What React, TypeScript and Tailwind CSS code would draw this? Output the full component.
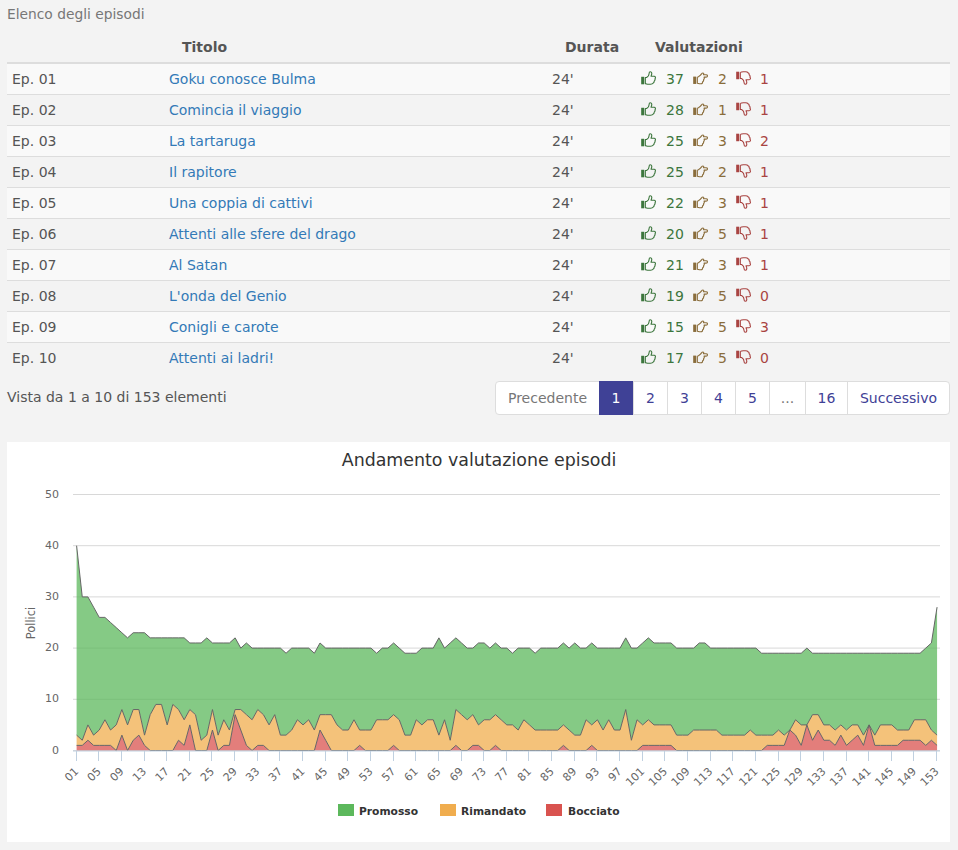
const FONT = "font-['DejaVu_Sans',Verdana,sans-serif]";

const rows = [
  ["Ep. 01", "Goku conosce Bulma", 37, 2, 1],
  ["Ep. 02", "Comincia il viaggio", 28, 1, 1],
  ["Ep. 03", "La tartaruga", 25, 3, 2],
  ["Ep. 04", "Il rapitore", 25, 2, 1],
  ["Ep. 05", "Una coppia di cattivi", 22, 3, 1],
  ["Ep. 06", "Attenti alle sfere del drago", 20, 5, 1],
  ["Ep. 07", "Al Satan", 21, 3, 1],
  ["Ep. 08", "L'onda del Genio", 19, 5, 0],
  ["Ep. 09", "Conigli e carote", 15, 5, 3],
  ["Ep. 10", "Attenti ai ladri!", 17, 5, 0],
] as const;

const total = [40,30,30,28,26,26,25,24,23,22,23,23,23,22,22,22,22,22,22,22,21,21,21,22,21,21,21,21,22,20,21,20,20,20,20,20,20,19,20,20,20,20,19,21,20,20,20,20,20,20,20,20,20,19,20,20,21,20,19,19,19,20,20,20,22,20,21,22,21,20,20,21,21,20,21,20,20,19,20,20,20,19,20,20,20,20,21,20,21,20,20,21,20,20,20,20,20,22,20,20,21,22,21,21,21,21,20,20,20,20,21,21,20,20,20,20,20,20,20,20,20,19,19,19,19,19,19,19,19,20,19,19,19,19,19,19,19,19,19,19,19,19,19,19,19,19,19,19,19,19,20,21,28];
const mid = [3,2,5,3,4,6,4,5,8,5,8,8,3,7,9,9,5,9,8,6,8,7,2,3,8,3,6,4,8,8,7,6,8,7,5,7,3,3,4,6,5,6,4,7,7,7,5,4,4,6,4,4,4,6,6,6,7,6,3,3,6,5,6,6,3,6,2,8,7,6,7,5,6,6,7,6,5,5,4,6,5,4,4,4,4,4,5,4,3,3,6,5,6,4,6,4,4,8,2,6,5,6,5,5,5,5,3,3,3,4,4,4,4,4,3,3,3,3,3,4,3,3,3,3,4,3,4,6,5,5,7,7,5,5,4,5,4,5,5,3,5,3,5,5,5,4,4,4,6,6,6,4,3];
const low = [1,1,2,1,1,1,1,0,3,0,2,3,1,0,0,0,0,0,2,1,5,0,0,0,4,0,1,1,7,4,1,0,1,1,0,0,0,0,0,0,0,0,0,4,2,0,0,0,0,0,1,0,0,0,0,0,1,0,0,0,0,0,0,0,0,0,0,1,0,0,1,1,0,0,1,0,0,0,0,0,0,0,0,0,0,0,1,0,0,0,0,1,0,0,0,0,0,0,0,0,1,1,1,1,1,1,0,0,0,0,0,0,0,0,0,0,0,0,0,0,0,0,1,1,1,1,4,3,1,5,2,4,2,2,1,3,1,2,3,1,5,1,1,1,1,1,2,2,2,2,1,2,1];

const X0 = 69.6;
const STEP = 5.661;
const Y0 = 308.5;
const UNIT = 5.12;
const px = (i: number) => +(X0 + i * STEP).toFixed(2);
const py = (v: number) => +(Y0 - v * UNIT).toFixed(2);
const line = (d: number[]) => d.map((v, i) => `${i ? "L" : "M"}${px(i)} ${py(v)}`).join(" ");
const band = (top: number[], bottom: number[] | null) => {
  const back = bottom
    ? bottom.map((_, i) => bottom.length - 1 - i).map((i) => `L${px(i)} ${py(bottom[i])}`).join(" ")
    : `L${px(152)} ${py(0)} L${px(0)} ${py(0)}`;
  return `${line(top)} ${back} Z`;
};

const ticks = Array.from({ length: 39 }, (_, k) => k * 4);
const grid = [0, 10, 20, 30, 40, 50];

function ThumbUp({ down = false }: { down?: boolean }) {
  return (
    <svg
      viewBox="0 0 16 16"
      preserveAspectRatio="none"
      className="w-[15px] h-[14px] shrink-0 mb-[3px]"
      style={down ? { transform: "scaleY(-1)" } : undefined}
    >
      <rect x="0.2" y="6.6" width="3.2" height="8.6" fill="currentColor" />
      <path
        d="M4.6 7.4 L6 7.4 C7.2 6.6 8.6 4.8 8.6 3 C8.6 1.6 9.1 0.8 10 0.8 C11.6 0.8 11.7 3 11.2 4.4 L10.7 6 L14 6 C15.6 6 15.7 8 14.9 9 C15.2 10 14.8 11 14.1 11.5 C14.2 12.8 13.6 13.6 12.8 13.9 C12.4 15 11.4 15.2 10.2 15.2 L7.8 15.2 C6.4 15.2 5.6 14.4 4.6 14.4 Z"
        fill="none"
        stroke="currentColor"
        strokeWidth="1.2"
        strokeLinejoin="round"
      />
    </svg>
  );
}

function HandRight() {
  return (
    <svg viewBox="0 0 16 16" preserveAspectRatio="none" className="w-[15px] h-[14px] shrink-0 mb-[3px]">
      <rect x="0.2" y="6.4" width="3.2" height="8.4" fill="currentColor" />
      <path
        d="M4.6 7.2 C6 7.2 7 5.6 8 4.6 C8.8 3.8 9.4 3 10 2.4 C11 1.8 11.9 2.8 11.2 4.2 L14 4.2 C15.9 4.2 15.9 7 14 7 L11.8 7 C12.2 8 12 9.2 11.3 9.8 C11.5 10.8 11 11.8 10.3 12.2 C10.3 13.6 9.6 14.6 8.4 14.6 L7.4 14.6 C6.2 14.6 5.6 14 4.6 14 Z"
        fill="none"
        stroke="currentColor"
        strokeWidth="1.2"
        strokeLinejoin="round"
      />
    </svg>
  );
}

function Chart() {
  const labelColor = "#666666";
  return (
    <svg width="943" height="400" viewBox="0 0 943 400" className="block">
      <text x="472" y="24" textAnchor="middle" fontSize="17.4" fill="#333333" fontFamily="'DejaVu Sans', sans-serif">
        Andamento valutazione episodi
      </text>
      {grid.map((g) => (
        <line key={g} x1="66" x2="933" y1={py(g)} y2={py(g)} stroke="#d8d8d8" strokeWidth="1" />
      ))}
      {grid.map((g) => (
        <text key={g} x="52" y={py(g) + 3} textAnchor="end" fontSize="11" fill={labelColor} fontFamily="'DejaVu Sans', sans-serif">
          {g}
        </text>
      ))}
      <text
        x="28"
        y="181"
        textAnchor="middle"
        fontSize="11.5"
        fill={labelColor}
        fontFamily="'DejaVu Sans', sans-serif"
        transform="rotate(-90 28 181)"
      >
        Pollici
      </text>

      <path d={band(total, mid)} fill="#5cb85c" fillOpacity="0.75" />
      <path d={band(mid, low)} fill="#f0ad4e" fillOpacity="0.75" />
      <path d={band(low, null)} fill="#d9534f" fillOpacity="0.75" />
      <path d={line(total)} fill="none" stroke="#666666" strokeWidth="1" />
      <path d={line(mid)} fill="none" stroke="#666666" strokeWidth="1" />
      <path d={line(low)} fill="none" stroke="#666666" strokeWidth="1" />

      <line x1="66" x2="933" y1="309" y2="309" stroke="#c0d0e0" strokeWidth="1" />
      {ticks.map((i) => (
        <g key={i}>
          <line x1={Math.round(px(i)) - 0.5} x2={Math.round(px(i)) - 0.5} y1="309" y2="319" stroke="#c0d0e0" strokeWidth="1" />
          <text
            x={px(i) + 2.5}
            y="330"
            textAnchor="end"
            fontSize="11"
            fill={labelColor}
            fontFamily="'DejaVu Sans', sans-serif"
            transform={`rotate(-45 ${px(i) + 2.5} 330)`}
          >
            {i + 1 < 10 ? `0${i + 1}` : i + 1}
          </text>
        </g>
      ))}

      {[
        [331, "#5cb85c", "Promosso", 352],
        [433, "#f0ad4e", "Rimandato", 454],
        [539, "#d9534f", "Bocciato", 561],
      ].map(([x, c, t, tx]) => (
        <g key={t as string}>
          <rect x={x as number} y="362" width="16" height="12" fill={c as string} />
          <text x={tx as number} y="373" fontSize="10.7" fontWeight="700" fill="#333333" fontFamily="'DejaVu Sans', sans-serif">
            {t}
          </text>
        </g>
      ))}
    </svg>
  );
}

const pages = ["1", "2", "3", "4", "5", "...", "16"];

export default function App() {
  return (
    <div className={`${FONT} bg-[#f3f3f3] w-[958px] h-[850px] overflow-hidden text-[14px] text-[#555] pl-[7px] pr-[8px]`}>
      <div className="h-[33px] pt-[5px] leading-[18px] text-[#777] text-[13.8px]">Elenco degli episodi</div>
      <table className="table-fixed w-[943px] border-collapse">
        <colgroup>
          <col className="w-[157px]" />
          <col className="w-[383px]" />
          <col className="w-[89px]" />
          <col />
        </colgroup>
        <thead>
          <tr className="h-[30px] border-b-2 border-[#ddd] text-left font-bold">
            <th></th>
            <th className="pl-[18px] pr-0">Titolo</th>
            <th className="pl-[18px]">Durata</th>
            <th className="pl-[19px]">Valutazioni</th>
          </tr>
        </thead>
        <tbody>
          {rows.map((r, i) => (
            <tr key={r[0]} className={`h-[31px] ${i < 9 ? "border-b border-[#ddd]" : ""} ${i % 2 === 0 ? "bg-[#f9f9f9]" : ""}`}>
              <td className="pl-[5px] pt-[2px]">{r[0]}</td>
              <td className="pl-[5px] pt-[2px]">
                <a className="text-[#337ab7]">{r[1]}</a>
              </td>
              <td className="pl-[5px] pt-[2px]">24'</td>
              <td className="pl-[5px] pt-[2px]">
                <div className="flex items-center">
                  <span className="flex items-center text-[#3c763d] w-[52px]">
                    <ThumbUp />
                    <span className="ml-[10px]">{r[2]}</span>
                  </span>
                  <span className="flex items-center text-[#8a6d3b] w-[43px]">
                    <HandRight />
                    <span className="ml-[10px]">{r[3]}</span>
                  </span>
                  <span className="flex items-center text-[#a94442]">
                    <ThumbUp down />
                    <span className="ml-[9px]">{r[4]}</span>
                  </span>
                </div>
              </td>
            </tr>
          ))}
        </tbody>
      </table>
      <div className="flex justify-between items-start mt-[8px] h-[61px]">
        <div className="mt-[7px] leading-[18px] text-[#555]">Vista da 1 a 10 di 153 elementi</div>
        <div className="flex h-[34px] bg-white border border-[#ddd] rounded-[4px] text-[#3f4196] leading-none">
          <span className="w-[103px] justify-center flex items-center text-[#777]">Precedente</span>
          {pages.map((p, i) => (
            <span
              key={p}
              className={`flex items-center justify-center ${
                i === 0 ? "bg-[#3f4196] text-white w-[34px] -my-px" : `border-l border-[#ddd] ${p === "..." ? "w-[36px] text-[#777]" : p === "16" ? "w-[42px]" : "w-[34px]"}`
              }`}
            >
              {p}
            </span>
          ))}
          <span className="border-l border-[#ddd] w-[102px] justify-center flex items-center">Successivo</span>
        </div>
      </div>
      <div className="bg-white w-[943px] h-[400px]">
        <Chart />
      </div>
    </div>
  );
}
